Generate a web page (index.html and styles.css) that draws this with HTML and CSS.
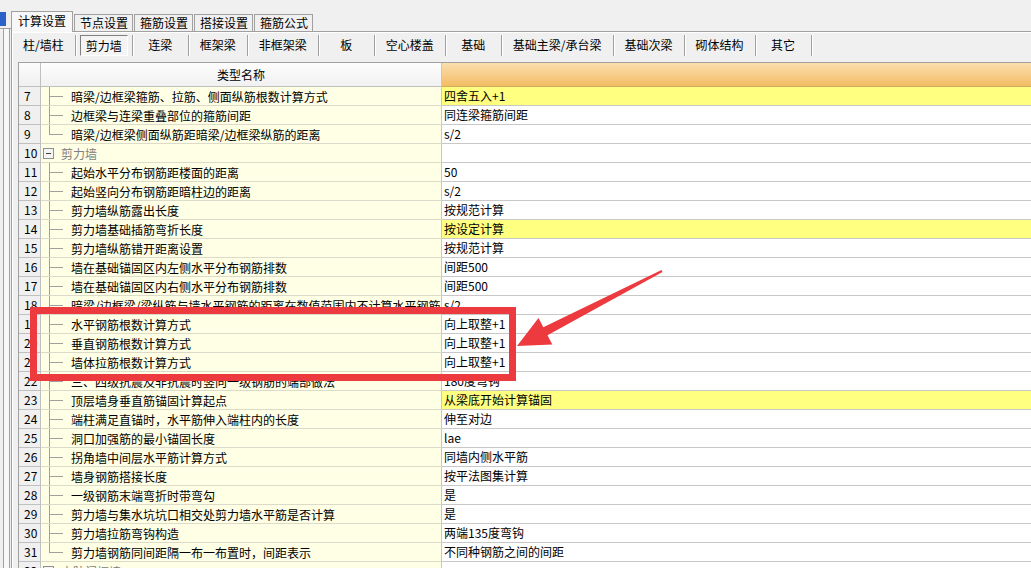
FILE: index.html
```html
<!DOCTYPE html>
<html lang="zh-CN">
<head>
<meta charset="utf-8">
<title>计算设置</title>
<link rel="stylesheet" href="styles.css">
</head>
<body>
<div class="app">
  <aside class="side">
    <div class="side-sel"></div>
    <div class="side-panel"><div class="side-inner"></div></div>
  </aside>
  <main class="main">
    <div class="tabs">
      <div class="tab active">计算设置</div>
      <div class="tab">节点设置</div>
      <div class="tab">箍筋设置</div>
      <div class="tab">搭接设置</div>
      <div class="tab">箍筋公式</div>
    </div>
    <div class="panel">
      <div class="subtabs">
        <div class="sub">柱/墙柱</div>
        <div class="sub on"><span class="pressed">剪力墙</span></div>
        <div class="sub">连梁</div>
        <div class="sub">框架梁</div>
        <div class="sub">非框架梁</div>
        <div class="sub">板</div>
        <div class="sub">空心楼盖</div>
        <div class="sub">基础</div>
        <div class="sub">基础主梁/承台梁</div>
        <div class="sub">基础次梁</div>
        <div class="sub">砌体结构</div>
        <div class="sub">其它</div>
      </div>
      <div class="grid">
        <div class="row head">
          <div class="num"></div>
          <div class="name">类型名称</div>
          <div class="val"></div>
        </div>
        <div class="row"><div class="num">7</div><div class="name"><span class="tree"></span>暗梁/边框梁箍筋、拉筋、侧面纵筋根数计算方式</div><div class="val hl">四舍五入+1</div></div>
        <div class="row"><div class="num">8</div><div class="name"><span class="tree"></span>边框梁与连梁重叠部位的箍筋间距</div><div class="val">同连梁箍筋间距</div></div>
        <div class="row"><div class="num">9</div><div class="name"><span class="tree end"></span>暗梁/边框梁侧面纵筋距暗梁/边框梁纵筋的距离</div><div class="val">s/2</div></div>
        <div class="row"><div class="num">10</div><div class="name cat"><span class="box"></span>剪力墙</div><div class="val"></div></div>
        <div class="row"><div class="num">11</div><div class="name"><span class="tree"></span>起始水平分布钢筋距楼面的距离</div><div class="val">50</div></div>
        <div class="row"><div class="num">12</div><div class="name"><span class="tree"></span>起始竖向分布钢筋距暗柱边的距离</div><div class="val">s/2</div></div>
        <div class="row"><div class="num">13</div><div class="name"><span class="tree"></span>剪力墙纵筋露出长度</div><div class="val">按规范计算</div></div>
        <div class="row"><div class="num">14</div><div class="name"><span class="tree"></span>剪力墙基础插筋弯折长度</div><div class="val hl">按设定计算</div></div>
        <div class="row"><div class="num">15</div><div class="name"><span class="tree"></span>剪力墙纵筋错开距离设置</div><div class="val">按规范计算</div></div>
        <div class="row"><div class="num">16</div><div class="name"><span class="tree"></span>墙在基础锚固区内左侧水平分布钢筋排数</div><div class="val">间距500</div></div>
        <div class="row"><div class="num">17</div><div class="name"><span class="tree"></span>墙在基础锚固区内右侧水平分布钢筋排数</div><div class="val">间距500</div></div>
        <div class="row"><div class="num">18</div><div class="name"><span class="tree"></span>暗梁/边框梁/梁纵筋与墙水平钢筋的距离在数值范围内不计算水平钢筋</div><div class="val">s/2</div></div>
        <div class="row"><div class="num">19</div><div class="name"><span class="tree"></span>水平钢筋根数计算方式</div><div class="val">向上取整+1</div></div>
        <div class="row"><div class="num">20</div><div class="name"><span class="tree"></span>垂直钢筋根数计算方式</div><div class="val">向上取整+1</div></div>
        <div class="row"><div class="num">21</div><div class="name"><span class="tree"></span>墙体拉筋根数计算方式</div><div class="val">向上取整+1</div></div>
        <div class="row"><div class="num">22</div><div class="name"><span class="tree"></span>三、四级抗震及非抗震时竖向一级钢筋的端部做法</div><div class="val">180度弯钩</div></div>
        <div class="row"><div class="num">23</div><div class="name"><span class="tree"></span>顶层墙身垂直筋锚固计算起点</div><div class="val hl">从梁底开始计算锚固</div></div>
        <div class="row"><div class="num">24</div><div class="name"><span class="tree"></span>端柱满足直锚时，水平筋伸入端柱内的长度</div><div class="val">伸至对边</div></div>
        <div class="row"><div class="num">25</div><div class="name"><span class="tree"></span>洞口加强筋的最小锚固长度</div><div class="val">lae</div></div>
        <div class="row"><div class="num">26</div><div class="name"><span class="tree"></span>拐角墙中间层水平筋计算方式</div><div class="val">同墙内侧水平筋</div></div>
        <div class="row"><div class="num">27</div><div class="name"><span class="tree"></span>墙身钢筋搭接长度</div><div class="val">按平法图集计算</div></div>
        <div class="row"><div class="num">28</div><div class="name"><span class="tree"></span>一级钢筋末端弯折时带弯勾</div><div class="val">是</div></div>
        <div class="row"><div class="num">29</div><div class="name"><span class="tree"></span>剪力墙与集水坑坑口相交处剪力墙水平筋是否计算</div><div class="val">是</div></div>
        <div class="row"><div class="num">30</div><div class="name"><span class="tree"></span>剪力墙拉筋弯钩构造</div><div class="val">两端135度弯钩</div></div>
        <div class="row"><div class="num">31</div><div class="name"><span class="tree end"></span>剪力墙钢筋同间距隔一布一布置时，间距表示</div><div class="val">不同种钢筋之间的间距</div></div>
        <div class="row"><div class="num">32</div><div class="name cat"><span class="box"></span>人防门框墙</div><div class="val"></div></div>
      </div>
    </div>
  </main>
</div>
<div class="mark"></div>
<svg class="arrow" width="1031" height="568" viewBox="0 0 1031 568" aria-hidden="true">
  <polygon points="661.5,270.1 662.5,271.9 547.5,335.3 552.3,344.6 517,346 538.5,318 543.3,327.3" fill="#ec3a3f"/>
</svg>
</body>
</html>
```

FILE: styles.css
```css
* { box-sizing: border-box; }
html, body { margin: 0; }
body {
  width: 1031px;
  height: 568px;
  overflow: hidden;
  position: relative;
  background: #f0f0f0;
  font-family: "Noto Sans CJK SC", "Noto Sans", sans-serif;
  font-size: 12px;
  color: #000;
}
.app { display: flex; height: 568px; }

.side { width: 11px; flex-shrink: 0; display: flex; flex-direction: column; }
.side-sel { margin-top: 12px; width: 6px; height: 14px; background: #2b63c9; }
.side-panel { margin-top: 2px; flex: 1; border-top: 1px solid #a0a0a0; display: flex; }
.side-inner { margin-left: 3px; width: 7px; border-left: 1px solid #a0a0a0; border-right: 1px solid #a0a0a0; background: #f8f8f8; }

.main { flex: 1; min-width: 0; display: flex; flex-direction: column; }

.tabs { height: 31px; display: flex; align-items: flex-end; }
.tab {
  height: 17px;
  line-height: 15px;
  padding: 0 4px 0 5px;
  margin-right: 1px;
  border: 1px solid #a0a0a0;
  border-bottom: 0;
  background: #f0f0f0;
  white-space: nowrap;
}
.tab.active {
  position: relative;
  z-index: 1;
  height: 21px;
  margin-bottom: -1px;
  padding: 0 6px;
  line-height: 17px;
  background: #f7f7f7;
}

.panel {
  flex: 1;
  min-height: 0;
  display: flex;
  flex-direction: column;
  border-left: 1px solid #a0a0a0;
  border-top: 1px solid #a0a0a0;
  box-shadow: inset 1px 1px #fff;
}

.subtabs { height: 30px; display: flex; align-items: flex-start; padding-top: 3px; }
.sub {
  flex-shrink: 0;
  height: 21px;
  min-width: 56px;
  padding: 0 11px;
  line-height: 19px;
  text-align: center;
  white-space: nowrap;
  border-right: 1px solid #a0a0a0;
  box-shadow: 1px 0 #fff;
}
.sub.on { padding: 0 4px; }
.pressed {
  display: block;
  height: 21px;
  padding: 0 5px;
  line-height: 20px;
  border: 1px solid;
  border-color: #808080 #fff #fff #808080;
  background: #f4f4f4;
}

.grid {
  flex: 1;
  margin-left: 6px;
  border-top: 1px solid #a0a0a0;
  border-left: 1px solid #a0a0a0;
  background: #fff;
  overflow: hidden;
}
.row { display: flex; height: 19px; flex-shrink: 0; }
.num {
  width: 22px;
  flex-shrink: 0;
  padding-left: 5px;
  line-height: 18px;
  background: #f0f0f0;
  border-right: 1px solid #c0c0c0;
  border-bottom: 1px solid #c0c0c0;
}
.name {
  width: 401px;
  flex-shrink: 0;
  display: flex;
  align-items: center;
  overflow: hidden;
  white-space: nowrap;
  background: #ffffe6;
  border-right: 1px solid #c8c8c8;
  border-bottom: 1px solid #dcdac8;
}
.val {
  flex: 1;
  padding-left: 2px;
  line-height: 18px;
  white-space: nowrap;
  border-bottom: 1px solid #c8c8c8;
}
.val.hl { background: #ffff80; }

.head { height: 24px; }
.head .num { background: linear-gradient(#fcfcfc, #f0f0f0); border-bottom-color: #c0c0c0; }
.head .name {
  justify-content: center;
  background: linear-gradient(#fdfdfd, #f1f1f1);
  border-bottom-color: #c0c0c0;
}
.head .val { background: linear-gradient(#fbdeae, #f7cf8e 45%, #f2bd62); border-bottom-color: #d9a860; }

.tree {
  width: 30px;
  flex-shrink: 0;
  align-self: stretch;
  background:
    linear-gradient(#a0a0a0, #a0a0a0) 8px 0 / 1px 100% no-repeat,
    linear-gradient(#a0a0a0, #a0a0a0) 8px 9px / 14px 1px no-repeat;
}
.tree.end { background-size: 1px 10px, 14px 1px; }

.cat { color: #808080; }
.box {
  width: 11px;
  height: 11px;
  flex-shrink: 0;
  margin: 0 7px 0 2px;
  border: 1px solid #909090;
  background: #f4f4f4 linear-gradient(#404040, #404040) center / 5px 1px no-repeat;
}

.mark {
  position: absolute;
  left: 30px;
  top: 307px;
  width: 486px;
  height: 74px;
  border: 7px solid #ec3a3f;
}
.arrow { position: absolute; left: 0; top: 0; pointer-events: none; }
```
